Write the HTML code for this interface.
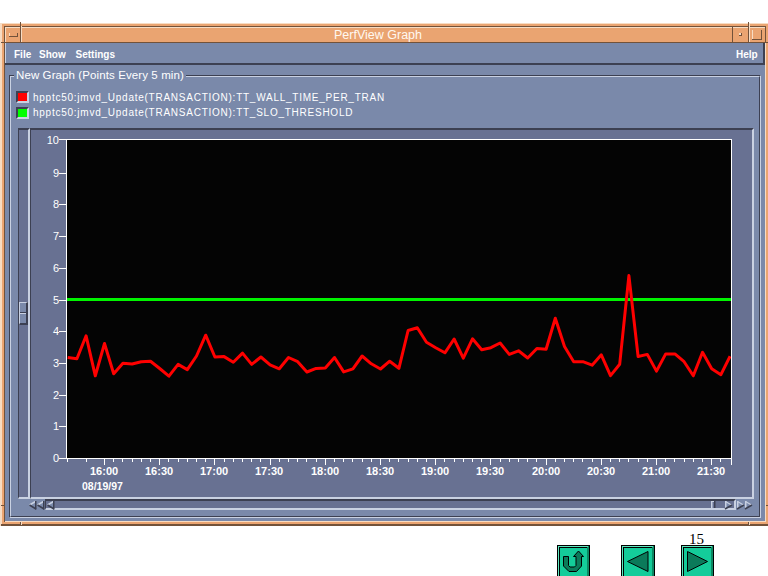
<!DOCTYPE html>
<html><head><meta charset="utf-8"><style>
html,body{margin:0;padding:0;background:#fff;width:768px;height:576px;overflow:hidden;position:relative}
div,span{position:absolute;white-space:nowrap}
svg{position:absolute}
</style></head><body>
<div style="left:0px;top:23px;width:768px;height:503px;background:#eaa471"></div><div style="left:0px;top:23px;width:768px;height:1px;background:#f7dcc3"></div><div style="left:0px;top:23px;width:2px;height:503px;background:#f7dcc3"></div><div style="left:1px;top:524px;width:767px;height:2px;background:#72523a"></div><div style="left:4px;top:26px;width:762px;height:1px;background:#72523a"></div><div style="left:4px;top:26px;width:1px;height:496px;background:#72523a"></div><div style="left:5px;top:521px;width:761px;height:1px;background:#f7dcc3"></div><div style="left:765px;top:43px;width:1px;height:479px;background:#f7dcc3"></div><div style="left:765px;top:26px;width:1px;height:17px;background:#72523a"></div><div style="left:5px;top:27px;width:760px;height:1px;background:#f7dcc3"></div><div style="left:5px;top:27px;width:1px;height:16px;background:#f7dcc3"></div><div style="left:1px;top:42px;width:4px;height:1px;background:#72523a"></div><div style="left:1px;top:505px;width:3px;height:1px;background:#72523a"></div><div style="left:765px;top:42px;width:3px;height:1px;background:#72523a"></div><div style="left:766px;top:505px;width:2px;height:1px;background:#72523a"></div><div style="left:20px;top:522px;width:1px;height:3px;background:#72523a"></div><div style="left:21px;top:522px;width:1px;height:3px;background:#f7dcc3"></div><div style="left:748px;top:522px;width:1px;height:3px;background:#72523a"></div><div style="left:749px;top:522px;width:1px;height:3px;background:#f7dcc3"></div><div style="left:20px;top:22px;width:1px;height:21px;background:#72523a"></div><div style="left:21px;top:26px;width:1px;height:17px;background:#f7dcc3"></div><div style="left:732px;top:27px;width:1px;height:16px;background:#72523a"></div><div style="left:748px;top:22px;width:1px;height:21px;background:#72523a"></div><div style="left:749px;top:23px;width:1px;height:20px;background:#f7dcc3"></div><div style="left:4px;top:42px;width:762px;height:1px;background:#72523a"></div><div style="left:9px;top:33px;width:1px;height:4px;background:#f7dcc3"></div><div style="left:9px;top:36px;width:9px;height:1px;background:#72523a"></div><div style="left:17px;top:33px;width:1px;height:4px;background:#72523a"></div><div style="left:739px;top:33px;width:2px;height:2px;background:#f7dcc3"></div><div style="left:741px;top:33px;width:1px;height:3px;background:#72523a"></div><div style="left:739px;top:35px;width:3px;height:1px;background:#72523a"></div><div style="left:752px;top:30px;width:1px;height:10px;background:#f7dcc3"></div><div style="left:752px;top:39px;width:10px;height:1px;background:#72523a"></div><div style="left:761px;top:30px;width:1px;height:10px;background:#72523a"></div><span style="left:334px;top:28px;font:12.5px 'Liberation Sans',sans-serif;color:#fff8f0;line-height:14px">PerfView Graph</span><div style="left:5px;top:43px;width:760px;height:478px;background:#7a89aa"></div><div style="left:5px;top:43px;width:1px;height:21px;background:#c9d1e2"></div><div style="left:5px;top:63px;width:759px;height:2px;background:#3c4052"></div><div style="left:763px;top:43px;width:2px;height:22px;background:#3c4052"></div><span style="left:14px;top:48px;font:bold 10px 'Liberation Sans',sans-serif;color:#fff;line-height:14px">File</span><span style="left:39px;top:48px;font:bold 10px 'Liberation Sans',sans-serif;color:#fff;line-height:14px">Show</span><span style="left:75.5px;top:48px;font:bold 10px 'Liberation Sans',sans-serif;color:#fff;line-height:14px">Settings</span><span style="left:736px;top:48px;font:bold 10px 'Liberation Sans',sans-serif;color:#fff;line-height:14px">Help</span><div style="left:9px;top:75px;width:752px;height:443px;border-top:1px solid #3c4052;border-left:1px solid #3c4052;border-right:1px solid #c9d1e2;border-bottom:1px solid #c9d1e2;box-sizing:border-box"></div><div style="left:10px;top:76px;width:750px;height:441px;border-top:1px solid #c9d1e2;border-left:1px solid #c9d1e2;border-right:1px solid #3c4052;border-bottom:1px solid #3c4052;box-sizing:border-box"></div><span style="left:14px;top:68px;font:11.5px 'Liberation Sans',sans-serif;letter-spacing:0.1px;color:#fff;line-height:14px;background:#7a89aa;padding:0 2px">New Graph (Points Every 5 min)</span><div style="left:16px;top:91px;width:13px;height:12px;background:#ff0000;border-top:2px solid #3c4052;border-left:2px solid #3c4052;border-right:2px solid #c9d1e2;border-bottom:2px solid #c9d1e2;box-sizing:border-box"></div><div style="left:16px;top:107px;width:13px;height:12px;background:#00ff00;border-top:2px solid #3c4052;border-left:2px solid #3c4052;border-right:2px solid #c9d1e2;border-bottom:2px solid #c9d1e2;box-sizing:border-box"></div><span style="left:33px;top:92px;font:10px 'Liberation Sans',sans-serif;color:#fff;line-height:12px;letter-spacing:0.75px">hpptc50:jmvd_Update(TRANSACTION):TT_WALL_TIME_PER_TRAN</span><span style="left:33px;top:107px;font:10px 'Liberation Sans',sans-serif;color:#fff;line-height:12px;letter-spacing:0.75px">hpptc50:jmvd_Update(TRANSACTION):TT_SLO_THRESHOLD</span><div style="left:18px;top:128px;width:12px;height:371px;background:#687192;border-top:2px solid #3c4052;border-left:1px solid #3c4052;border-right:2px solid #c9d1e2;border-bottom:2px solid #c9d1e2;box-sizing:border-box"></div><div style="left:19px;top:302px;width:9px;height:23px;background:#7a89aa;border-top:1px solid #c9d1e2;border-left:1px solid #c9d1e2;border-right:2px solid #3c4052;border-bottom:2px solid #3c4052;box-sizing:border-box"></div><div style="left:20px;top:312px;width:6px;height:1px;background:#3c4052"></div><div style="left:20px;top:313px;width:6px;height:1px;background:#c9d1e2"></div><div style="left:30px;top:128px;width:724px;height:371px;background:#687192;border-top:2px solid #3c4052;border-left:1px solid #3c4052;border-right:2px solid #c9d1e2;border-bottom:2px solid #c9d1e2;box-sizing:border-box"></div><div style="left:45px;top:499px;width:691px;height:11px;background:#687192;border-top:2px solid #3c4052;border-left:1px solid #3c4052;border-right:2px solid #c9d1e2;border-bottom:2px solid #c9d1e2;box-sizing:border-box"></div><div style="left:66px;top:139px;width:666px;height:320px;background:#040404;border:1px solid #fff;box-sizing:border-box"></div><span style="left:0px;top:451px;width:59px;text-align:right;font:11px 'Liberation Sans',sans-serif;color:#fff;line-height:14px">0</span><span style="left:0px;top:419px;width:59px;text-align:right;font:11px 'Liberation Sans',sans-serif;color:#fff;line-height:14px">1</span><span style="left:0px;top:388px;width:59px;text-align:right;font:11px 'Liberation Sans',sans-serif;color:#fff;line-height:14px">2</span><span style="left:0px;top:356px;width:59px;text-align:right;font:11px 'Liberation Sans',sans-serif;color:#fff;line-height:14px">3</span><span style="left:0px;top:324px;width:59px;text-align:right;font:11px 'Liberation Sans',sans-serif;color:#fff;line-height:14px">4</span><span style="left:0px;top:293px;width:59px;text-align:right;font:11px 'Liberation Sans',sans-serif;color:#fff;line-height:14px">5</span><span style="left:0px;top:261px;width:59px;text-align:right;font:11px 'Liberation Sans',sans-serif;color:#fff;line-height:14px">6</span><span style="left:0px;top:229px;width:59px;text-align:right;font:11px 'Liberation Sans',sans-serif;color:#fff;line-height:14px">7</span><span style="left:0px;top:197px;width:59px;text-align:right;font:11px 'Liberation Sans',sans-serif;color:#fff;line-height:14px">8</span><span style="left:0px;top:166px;width:59px;text-align:right;font:11px 'Liberation Sans',sans-serif;color:#fff;line-height:14px">9</span><span style="left:0px;top:133px;width:59px;text-align:right;font:11px 'Liberation Sans',sans-serif;color:#fff;line-height:14px">10</span><span style="left:90px;top:465px;font:bold 11px 'Liberation Sans',sans-serif;color:#fff;line-height:12px">16:00</span><span style="left:145px;top:465px;font:bold 11px 'Liberation Sans',sans-serif;color:#fff;line-height:12px">16:30</span><span style="left:200px;top:465px;font:bold 11px 'Liberation Sans',sans-serif;color:#fff;line-height:12px">17:00</span><span style="left:255px;top:465px;font:bold 11px 'Liberation Sans',sans-serif;color:#fff;line-height:12px">17:30</span><span style="left:311px;top:465px;font:bold 11px 'Liberation Sans',sans-serif;color:#fff;line-height:12px">18:00</span><span style="left:366px;top:465px;font:bold 11px 'Liberation Sans',sans-serif;color:#fff;line-height:12px">18:30</span><span style="left:421px;top:465px;font:bold 11px 'Liberation Sans',sans-serif;color:#fff;line-height:12px">19:00</span><span style="left:476px;top:465px;font:bold 11px 'Liberation Sans',sans-serif;color:#fff;line-height:12px">19:30</span><span style="left:532px;top:465px;font:bold 11px 'Liberation Sans',sans-serif;color:#fff;line-height:12px">20:00</span><span style="left:587px;top:465px;font:bold 11px 'Liberation Sans',sans-serif;color:#fff;line-height:12px">20:30</span><span style="left:642px;top:465px;font:bold 11px 'Liberation Sans',sans-serif;color:#fff;line-height:12px">21:00</span><span style="left:697px;top:465px;font:bold 11px 'Liberation Sans',sans-serif;color:#fff;line-height:12px">21:30</span><span style="left:82px;top:480px;font:bold 10.5px 'Liberation Sans',sans-serif;color:#fff;line-height:12px">08/19/97</span><span style="left:689px;top:531px;font:15px 'Liberation Serif',serif;color:#000;line-height:16px">15</span>
<svg width="768" height="576" style="position:absolute;left:0;top:0"><rect x="59" y="458" width="7" height="1" fill="#fff"/><rect x="59" y="426" width="7" height="1" fill="#fff"/><rect x="59" y="395" width="7" height="1" fill="#fff"/><rect x="59" y="363" width="7" height="1" fill="#fff"/><rect x="59" y="331" width="7" height="1" fill="#fff"/><rect x="59" y="300" width="7" height="1" fill="#fff"/><rect x="59" y="268" width="7" height="1" fill="#fff"/><rect x="59" y="236" width="7" height="1" fill="#fff"/><rect x="59" y="204" width="7" height="1" fill="#fff"/><rect x="59" y="173" width="7" height="1" fill="#fff"/><rect x="59" y="139" width="7" height="1" fill="#fff"/><rect x="67" y="458" width="1" height="4" fill="#fff"/><rect x="86" y="458" width="1" height="4" fill="#fff"/><rect x="104" y="458" width="1" height="7" fill="#fff"/><rect x="113" y="458" width="1" height="4" fill="#fff"/><rect x="122" y="458" width="1" height="4" fill="#fff"/><rect x="132" y="458" width="1" height="4" fill="#fff"/><rect x="141" y="458" width="1" height="4" fill="#fff"/><rect x="150" y="458" width="1" height="4" fill="#fff"/><rect x="159" y="458" width="1" height="7" fill="#fff"/><rect x="168" y="458" width="1" height="4" fill="#fff"/><rect x="178" y="458" width="1" height="4" fill="#fff"/><rect x="187" y="458" width="1" height="4" fill="#fff"/><rect x="196" y="458" width="1" height="4" fill="#fff"/><rect x="205" y="458" width="1" height="4" fill="#fff"/><rect x="214" y="458" width="1" height="7" fill="#fff"/><rect x="224" y="458" width="1" height="4" fill="#fff"/><rect x="233" y="458" width="1" height="4" fill="#fff"/><rect x="242" y="458" width="1" height="4" fill="#fff"/><rect x="251" y="458" width="1" height="4" fill="#fff"/><rect x="260" y="458" width="1" height="4" fill="#fff"/><rect x="270" y="458" width="1" height="7" fill="#fff"/><rect x="279" y="458" width="1" height="4" fill="#fff"/><rect x="288" y="458" width="1" height="4" fill="#fff"/><rect x="297" y="458" width="1" height="4" fill="#fff"/><rect x="306" y="458" width="1" height="4" fill="#fff"/><rect x="316" y="458" width="1" height="4" fill="#fff"/><rect x="325" y="458" width="1" height="7" fill="#fff"/><rect x="334" y="458" width="1" height="4" fill="#fff"/><rect x="343" y="458" width="1" height="4" fill="#fff"/><rect x="352" y="458" width="1" height="4" fill="#fff"/><rect x="362" y="458" width="1" height="4" fill="#fff"/><rect x="371" y="458" width="1" height="4" fill="#fff"/><rect x="380" y="458" width="1" height="7" fill="#fff"/><rect x="389" y="458" width="1" height="4" fill="#fff"/><rect x="398" y="458" width="1" height="4" fill="#fff"/><rect x="408" y="458" width="1" height="4" fill="#fff"/><rect x="417" y="458" width="1" height="4" fill="#fff"/><rect x="426" y="458" width="1" height="4" fill="#fff"/><rect x="435" y="458" width="1" height="7" fill="#fff"/><rect x="444" y="458" width="1" height="4" fill="#fff"/><rect x="454" y="458" width="1" height="4" fill="#fff"/><rect x="463" y="458" width="1" height="4" fill="#fff"/><rect x="472" y="458" width="1" height="4" fill="#fff"/><rect x="481" y="458" width="1" height="4" fill="#fff"/><rect x="490" y="458" width="1" height="7" fill="#fff"/><rect x="500" y="458" width="1" height="4" fill="#fff"/><rect x="509" y="458" width="1" height="4" fill="#fff"/><rect x="518" y="458" width="1" height="4" fill="#fff"/><rect x="527" y="458" width="1" height="4" fill="#fff"/><rect x="536" y="458" width="1" height="4" fill="#fff"/><rect x="546" y="458" width="1" height="7" fill="#fff"/><rect x="555" y="458" width="1" height="4" fill="#fff"/><rect x="564" y="458" width="1" height="4" fill="#fff"/><rect x="573" y="458" width="1" height="4" fill="#fff"/><rect x="582" y="458" width="1" height="4" fill="#fff"/><rect x="592" y="458" width="1" height="4" fill="#fff"/><rect x="601" y="458" width="1" height="7" fill="#fff"/><rect x="610" y="458" width="1" height="4" fill="#fff"/><rect x="619" y="458" width="1" height="4" fill="#fff"/><rect x="628" y="458" width="1" height="4" fill="#fff"/><rect x="638" y="458" width="1" height="4" fill="#fff"/><rect x="647" y="458" width="1" height="4" fill="#fff"/><rect x="656" y="458" width="1" height="7" fill="#fff"/><rect x="665" y="458" width="1" height="4" fill="#fff"/><rect x="674" y="458" width="1" height="4" fill="#fff"/><rect x="684" y="458" width="1" height="4" fill="#fff"/><rect x="693" y="458" width="1" height="4" fill="#fff"/><rect x="702" y="458" width="1" height="4" fill="#fff"/><rect x="711" y="458" width="1" height="7" fill="#fff"/><rect x="720" y="458" width="1" height="4" fill="#fff"/><rect x="731" y="458" width="1" height="7" fill="#fff"/><rect x="67" y="298" width="664" height="3" fill="#00f400"/><clipPath id="c"><rect x="67" y="140" width="664" height="318"/></clipPath><polyline clip-path="url(#c)" points="67.7,357.5 76.9,358.8 86.1,335.8 95.3,375.8 104.5,343.5 113.7,373.8 122.9,363.3 132.1,364.0 141.3,361.7 150.5,361.2 159.7,368.5 168.9,376.2 178.1,364.4 187.3,369.6 196.5,356.0 205.7,335.2 214.9,357.0 224.1,356.6 233.3,362.2 242.5,353.1 251.7,364.4 260.9,357.0 270.1,364.8 279.3,368.8 288.5,357.5 297.7,361.7 306.9,372.0 316.1,368.4 325.3,368.0 334.5,357.5 343.7,371.9 352.9,368.8 362.1,356.0 371.3,363.8 380.5,369.0 389.7,361.2 398.9,368.3 408.1,330.5 417.3,327.8 426.5,342.2 435.7,347.7 444.9,352.8 454.1,339.0 463.3,358.1 472.5,338.8 481.7,349.7 490.9,347.7 500.1,343.0 509.3,354.4 518.5,350.8 527.7,358.0 536.9,348.5 546.1,349.2 555.3,318.3 564.5,346.5 573.7,361.7 582.9,361.7 592.1,365.2 601.3,354.8 610.5,375.6 619.7,364.2 628.9,275.6 638.1,356.5 647.3,354.4 656.5,371.1 665.7,353.9 674.9,353.9 684.1,361.7 693.3,375.8 702.5,352.3 711.7,368.8 720.9,374.7 730.1,356.2" fill="none" stroke="#ff0000" stroke-width="3" stroke-linejoin="round"/><polygon points="29,505 36,501 36,509" fill="#7a89aa"/><path d="M29.5,505 L35.5,501.5" stroke="#c9d1e2" stroke-width="1.5" fill="none"/><path d="M29.5,505 L36,509" stroke="#3c4052" stroke-width="1.5" fill="none"/><rect x="35" y="501" width="1.5" height="8.5" fill="#3c4052"/><polygon points="37,505 44,501 44,509" fill="#7a89aa"/><path d="M37.5,505 L43.5,501.5" stroke="#c9d1e2" stroke-width="1.5" fill="none"/><path d="M37.5,505 L44,509" stroke="#3c4052" stroke-width="1.5" fill="none"/><rect x="43" y="501" width="1.5" height="8.5" fill="#3c4052"/><polygon points="47,505 54,501 54,509" fill="#7a89aa"/><path d="M47.5,505 L53.5,501.5" stroke="#c9d1e2" stroke-width="1.5" fill="none"/><path d="M47.5,505 L54,509" stroke="#3c4052" stroke-width="1.5" fill="none"/><rect x="53" y="501" width="1.5" height="8.5" fill="#3c4052"/><polygon points="737,501 737,509 744,505" fill="#7a89aa"/><rect x="737" y="501" width="1.5" height="8" fill="#c9d1e2"/><path d="M737.5,501.5 L743.5,505" stroke="#c9d1e2" stroke-width="1.2" fill="none"/><path d="M737,509 L744,505" stroke="#3c4052" stroke-width="1.5" fill="none"/><polygon points="745,501 745,509 752,505" fill="#7a89aa"/><rect x="745" y="501" width="1.5" height="8" fill="#c9d1e2"/><path d="M745.5,501.5 L751.5,505" stroke="#c9d1e2" stroke-width="1.2" fill="none"/><path d="M745,509 L752,505" stroke="#3c4052" stroke-width="1.5" fill="none"/><polygon points="725,501 725,509 732,505" fill="#7a89aa"/><rect x="725" y="501" width="1.5" height="8" fill="#c9d1e2"/><path d="M725.5,501.5 L731.5,505" stroke="#c9d1e2" stroke-width="1.2" fill="none"/><path d="M725,509 L732,505" stroke="#3c4052" stroke-width="1.5" fill="none"/><rect x="711" y="501" width="1.5" height="7" fill="#c9d1e2"/><rect x="711" y="501" width="4" height="1" fill="#c9d1e2"/><rect x="714" y="501" width="1.5" height="7" fill="#3c4052"/></svg>
<svg width="33" height="32" style="position:absolute;left:557px;top:545px">
<rect x="0" y="0" width="33" height="32" fill="#000"/>
<rect x="1" y="1" width="31" height="31" fill="#0c8a64"/>
<rect x="1" y="1" width="1" height="31" fill="#5fe8c0"/>
<rect x="2" y="1" width="29" height="1" fill="#5fe8c0"/>
<rect x="2" y="2" width="28" height="30" fill="#000"/>
<rect x="3" y="3" width="27" height="29" fill="#14cc9a"/>
<path d="M6.5 11.5 H11.5 V20.5 L13 22 H17.5 L19 20.5 V11.5 H16.5 L21.5 6 L26.5 11.5 H24.5 V21 L19.5 26.5 H12 L6.5 21 Z" fill="#0b7a5a" stroke="#000" stroke-width="1"/>
</svg><svg width="34" height="32" style="position:absolute;left:621px;top:545px">
<rect x="0" y="0" width="34" height="32" fill="#000"/>
<rect x="1" y="1" width="32" height="31" fill="#0c8a64"/>
<rect x="1" y="1" width="1" height="31" fill="#5fe8c0"/>
<rect x="2" y="1" width="30" height="1" fill="#5fe8c0"/>
<rect x="2" y="2" width="29" height="30" fill="#000"/>
<rect x="3" y="3" width="28" height="29" fill="#14cc9a"/>
<polygon points="6.5,16.5 27,6.5 27,26.5" fill="#0b7a5a" stroke="#000" stroke-width="1"/>
</svg><svg width="33" height="32" style="position:absolute;left:681px;top:545px">
<rect x="0" y="0" width="33" height="32" fill="#000"/>
<rect x="1" y="1" width="31" height="31" fill="#0c8a64"/>
<rect x="1" y="1" width="1" height="31" fill="#5fe8c0"/>
<rect x="2" y="1" width="29" height="1" fill="#5fe8c0"/>
<rect x="2" y="2" width="28" height="30" fill="#000"/>
<rect x="3" y="3" width="27" height="29" fill="#14cc9a"/>
<polygon points="6.5,6.5 6.5,26.5 26.5,16.5" fill="#0b7a5a" stroke="#000" stroke-width="1"/>
</svg>
</body></html>
